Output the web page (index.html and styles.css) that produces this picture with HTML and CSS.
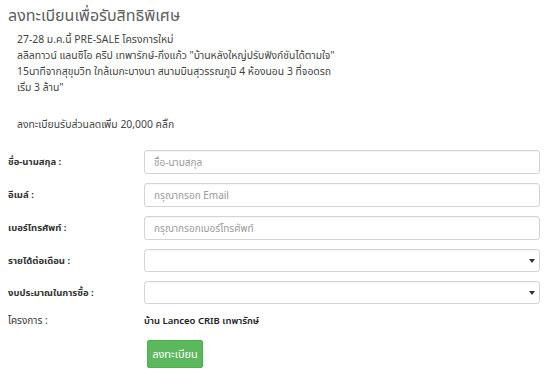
FILE: index.html
```html
<!DOCTYPE html>
<html lang="th">
<head>
<meta charset="utf-8">
<title>ลงทะเบียนเพื่อรับสิทธิพิเศษ</title>
<link rel="stylesheet" href="styles.css">
</head>
<body>
<div class="page">
  <h1 class="title">ลงทะเบียนเพื่อรับสิทธิพิเศษ</h1>
  <div class="intro">
    <p class="intro-p">27-28 ม.ค.นี้ PRE-SALE โครงการใหม่<br>
    ลลิลทาวน์ แลนซิโอ คริป เทพารักษ์-กิ่งแก้ว "บ้านหลังใหญ่ปรับฟังก์ชันได้ตามใจ"<br>
    15นาทีจากสุขุมวิท ใกล้เมกะบางนา สนามบินสุวรรณภูมิ 4 ห้องนอน 3 ที่จอดรถ<br>
    เริ่ม 3 ล้าน"</p>
    <p class="intro-p intro-last">ลงทะเบียนรับส่วนลดเพิ่ม 20,000 คลิ๊ก</p>
  </div>
  <form class="form">
    <label class="label" for="name">ชื่อ-นามสกุล :</label>
    <input class="field" id="name" type="text" placeholder="ชื่อ-นามสกุล">
    <label class="label" for="email">อีเมล์ :</label>
    <input class="field" id="email" type="text" placeholder="กรุณากรอก Email">
    <label class="label" for="tel">เบอร์โทรศัพท์ :</label>
    <input class="field" id="tel" type="text" placeholder="กรุณากรอกเบอร์โทรศัพท์">
    <label class="label" for="income">รายได้ต่อเดือน :</label>
    <div class="select-wrap"><select class="field select" id="income"><option></option></select></div>
    <label class="label" for="budget">งบประมาณในการซื้อ :</label>
    <div class="select-wrap"><select class="field select" id="budget"><option></option></select></div>
    <span class="label label-plain">โครงการ :</span>
    <span class="value">บ้าน Lanceo CRIB เทพารักษ์</span>
    <span></span>
    <div class="actions"><button class="btn" type="button">ลงทะเบียน</button></div>
  </form>
</div>
</body>
</html>
```
FILE: styles.css
```css
* { box-sizing: border-box; }
html, body {
  margin: 0;
  background: #fff;
}
body {
  font-family: "Noto Sans", "Noto Sans Thai", "Liberation Sans", sans-serif;
  color: #333;
}
.page {
  padding: 4px 10px 0 8px;
}
.title {
  margin: 0;
  font-size: 16px;
  line-height: 22px;
  font-weight: normal;
  color: #5e5e5e;
}
.intro {
  padding-left: 9px;
  margin-top: 5px;
  font-size: 10.4px;
  line-height: 16px;
  color: #444;
}
.intro-p {
  margin: 0;
}
.intro-last {
  margin-top: 21px;
}
.form {
  margin-top: 18px;
  display: grid;
  grid-template-columns: 136px 1fr;
  row-gap: 9px;
  align-items: center;
}
.label {
  font-size: 9.5px;
  font-weight: bold;
  color: #333;
}
.label-plain {
  font-weight: normal;
  font-size: 10px;
}
.field {
  display: block;
  width: 100%;
  height: 24px;
  border: 1px solid #d4d4d4;
  border-radius: 3px;
  padding: 0 9px;
  font-family: inherit;
  font-size: 10px;
  color: #555;
  background: #fff;
  box-shadow: inset 0 1px 1px rgba(0,0,0,0.04);
}
.field::placeholder {
  color: #9a9a9a;
}
.select-wrap {
  position: relative;
}
.select {
  height: 23px;
  appearance: none;
  -webkit-appearance: none;
}
.select-wrap::after {
  content: "";
  position: absolute;
  right: 5px;
  top: 10px;
  border-left: 3px solid transparent;
  border-right: 3px solid transparent;
  border-top: 4px solid #333;
  pointer-events: none;
}
.value {
  font-size: 9.5px;
  font-weight: 600;
  color: #222;
}
.actions {
  padding: 2px 0 0 3px;
}
.btn {
  width: 56px;
  height: 28px;
  border: 1px solid #4cae4c;
  border-radius: 2px;
  background: #5cb85c;
  color: #fff;
  font-family: inherit;
  font-size: 11px;
  padding: 0;
}
```
